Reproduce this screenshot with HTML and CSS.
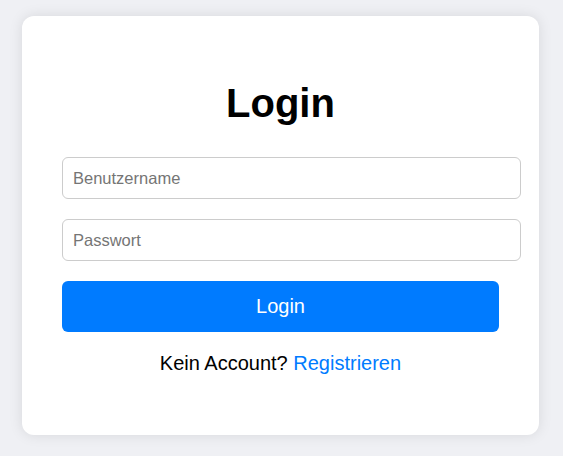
FILE: index.html
```html
<!DOCTYPE html>
<html lang="de">
<head>
<meta charset="utf-8">
<title>Login</title>
<link rel="stylesheet" href="styles.css">
</head>
<body>
  <main class="login-card">
    <h1 class="login-title">Login</h1>
    <form class="login-form">
      <input class="login-input" type="text" placeholder="Benutzername">
      <input class="login-input" type="password" placeholder="Passwort">
      <button class="login-button" type="submit">Login</button>
    </form>
    <p class="login-footer">Kein Account? <a class="login-link" href="#">Registrieren</a></p>
  </main>
</body>
</html>
```

FILE: styles.css
```css
html, body {
  margin: 0;
  height: 100%;
}

body {
  background: #eff0f4;
  font-family: "Liberation Sans", Arial, sans-serif;
  padding: 16px 0 0 22px;
  box-sizing: border-box;
}

.login-card {
  width: 437px;
  padding: 40px;
  background: #ffffff;
  border-radius: 12px;
  box-shadow: 0 0 14px rgba(0, 0, 0, 0.1);
  text-align: center;
}

.login-title {
  font-size: 40px;
  line-height: 46px;
  margin: 24px 0 31px;
  color: #000;
}

.login-form {
  display: flex;
  flex-direction: column;
  align-items: flex-start;
  gap: 20px;
}

.login-input {
  box-sizing: content-box;
  width: 100%;
  height: 20px;
  padding: 10px;
  margin: 0;
  border: 1px solid #cccccc;
  border-radius: 6px;
  font-family: inherit;
  font-size: 16.5px;
  color: #000;
  background: #fff;
}

.login-input::placeholder {
  color: #757575;
}

.login-button {
  width: 100%;
  height: 51px;
  margin: 0;
  border: none;
  border-radius: 6px;
  background: #007bff;
  color: #ffffff;
  font-family: inherit;
  font-size: 20px;
  cursor: pointer;
}

.login-footer {
  margin: 20px 0;
  font-size: 20px;
  line-height: 23px;
  color: #000;
}

.login-link {
  color: #007bff;
  text-decoration: none;
}
```
